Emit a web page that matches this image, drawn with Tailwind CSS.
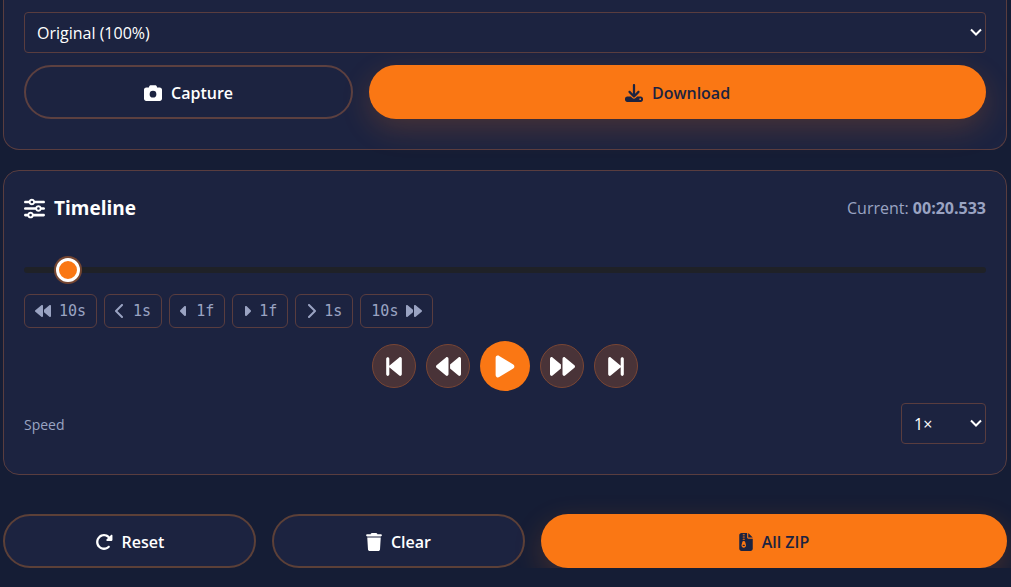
<!DOCTYPE html>
<html lang="en">
<head>
    <meta charset="UTF-8">
    <meta name="viewport" content="width=device-width, initial-scale=1.0">
    <script src="https://cdn.jsdelivr.net/npm/@tailwindcss/browser@4"></script>
    <title>Frame Capture</title>
</head>
<body class="bg-[#151d35] min-h-screen overflow-hidden font-['Open_Sans','Noto_Sans',sans-serif] text-base text-white">

    <main class="pl-[3px] pr-1">
        <!-- Capture -->
        <section class="bg-[#1c2340] border border-t-0 border-[#593d3f] rounded-b-2xl px-5 pt-3 pb-[30px] mb-5">
            <div class="relative mb-3">
                <select aria-label="Image size" class="block w-full h-[41px] px-3 appearance-none rounded border border-[#593d3f] bg-[#1c2340] text-white">
                    <option>Original (100%)</option>
                    <option>Half (50%)</option>
                </select>
                <svg class="absolute right-1 top-3.5 h-3 w-3 pointer-events-none" viewBox="0 0 12 12" fill="none" stroke="currentColor" stroke-width="2"><path d="M1 3.5l5 5 5-5"/></svg>
            </div>
            <div class="grid grid-cols-[8fr_15fr] gap-4">
                <button class="h-[54px] pt-0.5 rounded-full border-2 border-[#5c4040] bg-[#1c2340] font-semibold flex items-center justify-center gap-[9px]">
                    <svg class="h-[18px] w-[18px]" viewBox="0 0 512 512" fill="currentColor"><path d="M149.1 64.8L138.7 96H64C28.7 96 0 124.7 0 160V416c0 35.3 28.7 64 64 64H448c35.3 0 64-28.7 64-64V160c0-35.3-28.7-64-64-64H373.3L362.9 64.8C356.4 45.2 338.1 32 317.4 32H194.6c-20.7 0-39 13.2-45.5 32.8zM256 192a96 96 0 1 1 0 192 96 96 0 1 1 0-192z"/></svg>
                    Capture
                </button>
                <button class="h-[54px] pt-0.5 rounded-full bg-[#fa7714] text-[#1c2340] font-semibold shadow-[0_10px_30px_rgba(249,115,22,0.2)] flex items-center justify-center gap-[9px]">
                    <svg class="h-[18px] w-[18px]" viewBox="0 0 512 512" fill="currentColor"><path d="M288 32c0-17.7-14.3-32-32-32s-32 14.3-32 32V274.7l-73.4-73.4c-12.5-12.5-32.8-12.5-45.3 0s-12.5 32.8 0 45.3l128 128c12.5 12.5 32.8 12.5 45.3 0l128-128c12.5-12.5 12.5-32.8 0-45.3s-32.8-12.5-45.3 0L288 274.7V32zM64 352c-35.3 0-64 28.7-64 64v32c0 35.3 28.7 64 64 64H448c35.3 0 64-28.7 64-64V416c0-35.3-28.7-64-64-64H346.5l-45.3 45.3c-25 25-65.5 25-90.5 0L165.5 352H64zm368 56a24 24 0 1 1 0 48 24 24 0 1 1 0-48z"/></svg>
                    Download
                </button>
            </div>
        </section>

        <!-- Timeline -->
        <section class="bg-[#1c2340] border border-[#593d3f] rounded-2xl px-5 pt-5 pb-[30px]">
            <div class="flex items-center justify-between h-[34px]">
                <h2 class="flex items-center gap-[9px] text-[19px] font-bold">
                    <svg class="h-[21px] w-[21px]" viewBox="0 0 512 512" fill="currentColor"><path d="M0 416c0 17.7 14.3 32 32 32l54.7 0c12.3 28.3 40.5 48 73.3 48s61-19.7 73.3-48L480 448c17.7 0 32-14.3 32-32s-14.3-32-32-32l-246.7 0c-12.3-28.3-40.5-48-73.3-48s-61 19.7-73.3 48L32 384c-17.7 0-32 14.3-32 32zm128 0a32 32 0 1 1 64 0 32 32 0 1 1 -64 0zM320 256a32 32 0 1 1 64 0 32 32 0 1 1 -64 0zm32-80c-32.8 0-61 19.7-73.3 48L32 224c-17.7 0-32 14.3-32 32s14.3 32 32 32l246.7 0c12.3 28.3 40.5 48 73.3 48s61-19.7 73.3-48l54.7 0c17.7 0 32-14.3 32-32s-14.3-32-32-32l-54.7 0c-12.3-28.3-40.5-48-73.3-48zM192 128a32 32 0 1 1 0-64 32 32 0 1 1 0 64zm73.3-64C253 35.7 224.8 16 192 16s-61 19.7-73.3 48L32 64C14.3 64 0 78.3 0 96s14.3 32 32 32l86.7 0c12.3 28.3 40.5 48 73.3 48s61-19.7 73.3-48L480 128c17.7 0 32-14.3 32-32s-14.3-32-32-32L265.3 64z"/></svg>
                    Timeline
                </h2>
                <p class="text-[#9aa3c2]">Current: <strong class="font-bold">00:20.533</strong></p>
            </div>

            <input type="range" aria-label="Timeline position" min="0" max="1000" value="34" class="block w-full h-1.5 mt-[42px] mb-[21px] appearance-none rounded-full bg-[#1f2127] [&::-webkit-slider-thumb]:appearance-none [&::-webkit-slider-thumb]:h-6 [&::-webkit-slider-thumb]:w-6 [&::-webkit-slider-thumb]:rounded-full [&::-webkit-slider-thumb]:border-3 [&::-webkit-slider-thumb]:border-white [&::-webkit-slider-thumb]:bg-[#fa7714] [&::-webkit-slider-thumb]:shadow-[0_0_0_2px_#754632]">

            <!-- Jump buttons -->
            <div class="flex flex-wrap gap-[7px] font-['DejaVu_Sans_Mono',monospace] text-[15px] text-[#9aa3c2]">
                <button class="h-[34px] px-2.5 rounded-md border border-[#593d3f] flex items-center gap-2">
                    <svg class="h-4 w-4" viewBox="0 0 512 512" fill="currentColor"><path d="M459.5 440.6c9.5 7.9 22.8 9.7 34.1 4.4s18.4-16.6 18.4-29V96c0-12.4-7.2-23.7-18.4-29s-24.5-3.6-34.1 4.4L288 214.3V256v41.7L459.5 440.6zM256 352V256 128 96c0-12.4-7.2-23.7-18.4-29s-24.5-3.6-34.1 4.4l-192 160C4.2 237.5 0 246.5 0 256s4.2 18.5 11.5 24.6l192 160c9.5 7.9 22.8 9.7 34.1 4.4s18.4-16.6 18.4-29V352z"/></svg>
                    10s
                </button>
                <button class="h-[34px] px-2.5 rounded-md border border-[#593d3f] flex items-center gap-2">
                    <svg class="h-4 w-2.5" viewBox="0 0 320 512" fill="currentColor"><path d="M9.4 233.4c-12.5 12.5-12.5 32.8 0 45.3l192 192c12.5 12.5 32.8 12.5 45.3 0s12.5-32.8 0-45.3L77.3 256 246.6 86.6c12.5-12.5 12.5-32.8 0-45.3s-32.8-12.5-45.3 0l-192 192z"/></svg>
                    1s
                </button>
                <button class="h-[34px] px-2.5 rounded-md border border-[#593d3f] flex items-center gap-2">
                    <svg class="h-4 w-2" viewBox="0 0 256 512" fill="currentColor"><path d="M9.4 278.6c-12.5-12.5-12.5-32.8 0-45.3l128-128c9.2-9.2 22.9-11.9 34.9-6.9s19.8 16.6 19.8 29.6l0 256c0 12.9-7.8 24.6-19.8 29.6s-25.7 2.2-34.9-6.9l-128-128z"/></svg>
                    1f
                </button>
                <button class="h-[34px] px-2.5 rounded-md border border-[#593d3f] flex items-center gap-2">
                    <svg class="h-4 w-2" viewBox="0 0 256 512" fill="currentColor"><path d="M246.6 278.6c12.5-12.5 12.5-32.8 0-45.3l-128-128c-9.2-9.2-22.9-11.9-34.9-6.9s-19.8 16.6-19.8 29.6l0 256c0 12.9 7.8 24.6 19.8 29.6s25.7 2.2 34.9-6.9l128-128z"/></svg>
                    1f
                </button>
                <button class="h-[34px] px-2.5 rounded-md border border-[#593d3f] flex items-center gap-2">
                    <svg class="h-4 w-2.5" viewBox="0 0 320 512" fill="currentColor"><path d="M310.6 233.4c12.5 12.5 12.5 32.8 0 45.3l-192 192c-12.5 12.5-32.8 12.5-45.3 0s-12.5-32.8 0-45.3L242.7 256 73.4 86.6c-12.5-12.5-12.5-32.8 0-45.3s32.8-12.5 45.3 0l192 192z"/></svg>
                    1s
                </button>
                <button class="h-[34px] px-2.5 rounded-md border border-[#593d3f] flex items-center gap-2">
                    10s
                    <svg class="h-4 w-4" viewBox="0 0 512 512" fill="currentColor"><path d="M52.5 440.6c-9.5 7.9-22.8 9.7-34.1 4.4S0 428.4 0 416V96C0 83.6 7.2 72.3 18.4 67s24.5-3.6 34.1 4.4L224 214.3V256v41.7L52.5 440.6zM256 352V256 128 96c0-12.4 7.2-23.7 18.4-29s24.5-3.6 34.1 4.4l192 160c7.3 6.1 11.5 15.1 11.5 24.6s-4.2 18.5-11.5 24.6l-192 160c-9.5 7.9-22.8 9.7-34.1 4.4s-18.4-16.6-18.4-29V352z"/></svg>
                </button>
            </div>

            <!-- Player controls -->
            <div class="flex items-center justify-center gap-2.5 mt-[13px] mb-3">
                <button aria-label="First frame" class="h-11 w-11 rounded-full border border-[#7a4634] bg-[#493338] flex items-center justify-center">
                    <svg class="h-[25px] w-4" viewBox="0 0 320 512" fill="currentColor"><path d="M267.5 440.6c9.5 7.9 22.8 9.7 34.1 4.4s18.4-16.6 18.4-29V96c0-12.4-7.2-23.7-18.4-29s-24.5-3.6-34.1 4.4l-192 160L64 241V96c0-17.7-14.3-32-32-32S0 78.3 0 96V416c0 17.7 14.3 32 32 32s32-14.3 32-32V271l11.5 9.6 192 160z"/></svg>
                </button>
                <button aria-label="Rewind" class="h-11 w-11 rounded-full border border-[#7a4634] bg-[#493338] flex items-center justify-center">
                    <svg class="h-[25px] w-[25px]" viewBox="0 0 512 512" fill="currentColor"><path d="M459.5 440.6c9.5 7.9 22.8 9.7 34.1 4.4s18.4-16.6 18.4-29V96c0-12.4-7.2-23.7-18.4-29s-24.5-3.6-34.1 4.4L288 214.3V256v41.7L459.5 440.6zM256 352V256 128 96c0-12.4-7.2-23.7-18.4-29s-24.5-3.6-34.1 4.4l-192 160C4.2 237.5 0 246.5 0 256s4.2 18.5 11.5 24.6l192 160c9.5 7.9 22.8 9.7 34.1 4.4s18.4-16.6 18.4-29V352z"/></svg>
                </button>
                <button aria-label="Play" class="h-[50px] w-[50px] rounded-full bg-[#fa7714] flex items-center justify-center">
                    <svg class="h-[25px] w-5" viewBox="0 0 384 512" fill="currentColor"><path d="M73 39c-14.8-9.1-33.4-9.4-48.5-.9S0 62.6 0 80V432c0 17.4 9.4 33.4 24.5 41.9s33.7 8.1 48.5-.9L361 297c14.3-8.7 23-24.2 23-41s-8.7-32.2-23-41L73 39z"/></svg>
                </button>
                <button aria-label="Fast forward" class="h-11 w-11 rounded-full border border-[#7a4634] bg-[#493338] flex items-center justify-center">
                    <svg class="h-[25px] w-[25px]" viewBox="0 0 512 512" fill="currentColor"><path d="M52.5 440.6c-9.5 7.9-22.8 9.7-34.1 4.4S0 428.4 0 416V96C0 83.6 7.2 72.3 18.4 67s24.5-3.6 34.1 4.4L224 214.3V256v41.7L52.5 440.6zM256 352V256 128 96c0-12.4 7.2-23.7 18.4-29s24.5-3.6 34.1 4.4l192 160c7.3 6.1 11.5 15.1 11.5 24.6s-4.2 18.5-11.5 24.6l-192 160c-9.5 7.9-22.8 9.7-34.1 4.4s-18.4-16.6-18.4-29V352z"/></svg>
                </button>
                <button aria-label="Last frame" class="h-11 w-11 rounded-full border border-[#7a4634] bg-[#493338] flex items-center justify-center">
                    <svg class="h-[25px] w-4" viewBox="0 0 320 512" fill="currentColor"><path d="M52.5 440.6c-9.5 7.9-22.8 9.7-34.1 4.4S0 428.4 0 416V96C0 83.6 7.2 72.3 18.4 67s24.5-3.6 34.1 4.4l192 160L256 241V96c0-17.7 14.3-32 32-32s32 14.3 32 32V416c0 17.7-14.3 32-32 32s-32-14.3-32-32V271l-11.5 9.6-192 160z"/></svg>
                </button>
            </div>

            <div class="flex items-center justify-between">
                <label for="speed" class="text-sm pt-0.5 text-[#9aa3c2]">Speed</label>
                <div class="relative">
                    <select id="speed" class="block h-[41px] w-[85px] px-3 appearance-none rounded border border-[#593d3f] bg-[#1c2340] text-white">
                        <option>1×</option>
                        <option>2×</option>
                    </select>
                    <svg class="absolute right-1 top-3.5 h-3 w-3 pointer-events-none" viewBox="0 0 12 12" fill="none" stroke="currentColor" stroke-width="2"><path d="M1 3.5l5 5 5-5"/></svg>
                </div>
            </div>
        </section>
    </main>

    <!-- Bottom actions -->
    <footer class="grid grid-cols-[19fr_19fr_35fr] gap-4 overflow-hidden pl-[3px] pr-1 pt-[39px]">
        <button class="h-[54px] pt-0.5 rounded-full border-2 border-[#5c4038] bg-[#1c2340] font-semibold flex items-center justify-center gap-[9px]">
            <svg class="h-[18px] w-[18px]" viewBox="0 0 512 512" fill="currentColor"><path d="M463.5 224H472c13.3 0 24-10.7 24-24V72c0-9.7-5.8-18.5-14.8-22.2s-19.3-1.7-26.2 5.2L413.4 96.6c-87.6-86.5-228.7-86.2-315.8 1c-87.5 87.5-87.5 229.3 0 316.8s229.3 87.5 316.8 0c12.5-12.5 12.5-32.8 0-45.3s-32.8-12.5-45.3 0c-62.5 62.5-163.8 62.5-226.3 0s-62.5-163.8 0-226.3c62.2-62.2 162.7-62.5 225.3-1L327 183c-6.9 6.9-8.9 17.2-5.2 26.2s12.5 14.8 22.2 14.8H463.5z"/></svg>
            Reset
        </button>
        <button class="h-[54px] pt-0.5 rounded-full border-2 border-[#5c4038] bg-[#1c2340] font-semibold flex items-center justify-center gap-[9px]">
            <svg class="h-[18px] w-4" viewBox="0 0 448 512" fill="currentColor"><path d="M135.2 17.7L128 32H32C14.3 32 0 46.3 0 64S14.3 96 32 96H416c17.7 0 32-14.3 32-32s-14.3-32-32-32H320l-7.2-14.3C307.4 6.8 296.3 0 284.2 0H163.8c-12.1 0-23.2 6.8-28.6 17.7zM416 128H32L53.2 467c1.6 25.3 22.6 45 47.9 45H346.9c25.3 0 46.3-19.7 47.9-45L416 128z"/></svg>
            Clear
        </button>
        <button class="h-[54px] pt-0.5 rounded-full bg-[#fa7714] text-[#1c2340] font-semibold shadow-[0_10px_30px_rgba(249,115,22,0.2)] flex items-center justify-center gap-[9px]">
            <svg class="h-[18px] w-3.5" viewBox="0 0 384 512" fill="currentColor"><path d="M64 0C28.7 0 0 28.7 0 64V448c0 35.3 28.7 64 64 64H320c35.3 0 64-28.7 64-64V160H256c-17.7 0-32-14.3-32-32V0H64zM256 0V128H384L256 0zM96 48c0-8.8 7.2-16 16-16h32c8.8 0 16 7.2 16 16s-7.2 16-16 16H112c-8.8 0-16-7.2-16-16zm0 64c0-8.8 7.2-16 16-16h32c8.8 0 16 7.2 16 16s-7.2 16-16 16H112c-8.8 0-16-7.2-16-16zm0 64c0-8.8 7.2-16 16-16h32c8.8 0 16 7.2 16 16s-7.2 16-16 16H112c-8.8 0-16-7.2-16-16zm-6.3 71.8c3.7-14 16.4-23.8 30.9-23.8h14.8c14.5 0 27.2 9.7 30.9 23.8l23.5 88.2c1.4 5.4 2.1 10.9 2.1 16.4c0 35.2-28.8 63.7-64 63.7s-64-28.5-64-63.7c0-5.5 .7-11.1 2.1-16.4l23.5-88.2zM112 336c-8.8 0-16 7.2-16 16s7.2 16 16 16h32c8.8 0 16-7.2 16-16s-7.2-16-16-16H112z"/></svg>
            All ZIP
        </button>
    </footer>
</body>
</html>
